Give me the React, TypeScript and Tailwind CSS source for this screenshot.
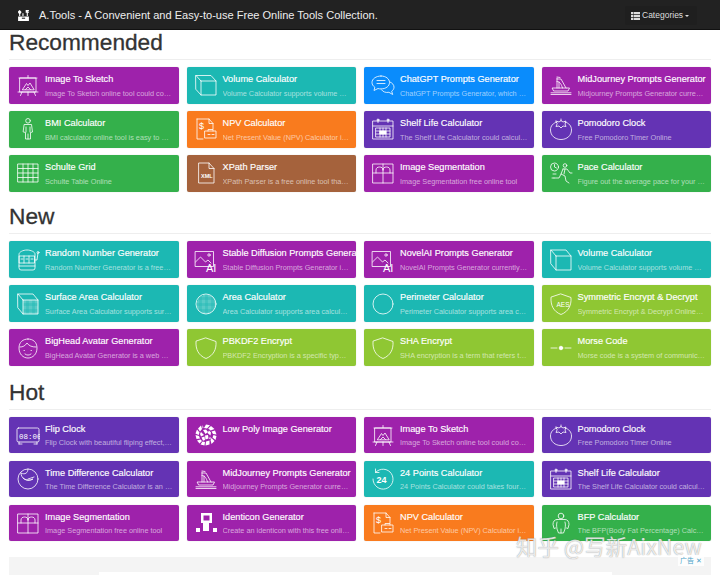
import React from "react";

const S = ({ children, fill }: { children: React.ReactNode; fill?: boolean }) => (
  <svg viewBox="0 0 24 24" className="w-[24px] h-[24px] shrink-0" fill={fill ? "currentColor" : "none"} stroke={fill ? "none" : "currentColor"} strokeWidth={0.8} strokeLinecap="round" strokeLinejoin="round">
    {children}
  </svg>
);

const dots = (x: number, y: number, w: number, h: number, keep?: (px: number, py: number) => boolean) => {
  const out: React.ReactNode[] = [];
  for (let i = x; i < x + w; i += 1.2)
    for (let j = y; j < y + h; j += 1.2)
      if (!keep || keep(i, j)) out.push(<rect key={`${i}-${j}`} x={i} y={j} width={0.6} height={0.6} fill="currentColor" stroke="none" opacity={0.75} />);
  return out;
};

const icons: Record<string, React.ReactNode> = {
  sketch: <S><path d="M2 19h20M12 2.500v2M4 5h16v14H4zM3 5h18M6 19l-1.500 3.500M18 19l1.500 3.500M12 19v3.500M6.500 16.500l4-6 1.500 2 2-2.500 4 6.500zM9.500 16.500l2.500-2.500 2.500 2.500" /></S>,
  cube: <S><path d="M2 2.500h15l5 5.500v14H7l-5-5.500zM7 8h15M7 8v14M2 2.500L7 8" /></S>,
  cube2: <S><path d="M2 2h15l5 6v14H7l-5-6zM7 8h15M7 8v14M2 2l5 6" /></S>,
  chat: <S><path d="M10 3c-5 0-9 2.800-9 6.500 0 2 1 3.500 2.800 4.700L3 17.500l4-2c1 .3 2 .4 3 .4 5 0 8.500-2.800 8.500-6.400S15 3 10 3z" /><path d="M6 7.500h8M6 10.500h8M19 9c2.500 1 4 3 4 5.200 0 1.600-.9 3-2.300 4l1 3.300-3.800-2.200c-3 .6-6-.4-7.400-2.500" /></S>,
  boat: <S><path d="M2 21.500h20M2 19.800h20M5 18h14l1.500-3H3.500zM8 15V5M8 6h4l5 9M8 8.500c3 0 4.500 3 5.500 6.500M8 4l3 .5M10 9v6" /></S>,
  person: <S><circle cx="12" cy="3.800" r="2.300" /><path d="M8.500 7.500h7l1 7.500-2 .5V22h-5v-6.500l-2-.5zM10 10v5M14 10v5M12 17v5" /></S>,
  npv: <S><path d="M3 2h12l4 4.500V12M3 2v20h6M15 2v4.500h4" /><text x="5" y="12" fontSize="9" fill="currentColor" stroke="none" fontFamily="Liberation Sans">$</text><rect x="11" y="14" width="11" height="7" /><path d="M14 14v-1.500h5V14M14 17.500h2M18 17.500h2" /></S>,
  cal: <S><rect x="2" y="4" width="20" height="18" /><path d="M2 9h20M7 2.500v3M17 2.500v3" /><circle cx="7" cy="3" r="1" /><circle cx="17" cy="3" r="1" /><rect x="5" y="11" width="14" height="9" /><path d="M5 14h14M5 17h14M9 11v9M12 11v9M15 11v9" /><rect x="9" y="14" width="6" height="3" fill="currentColor" /></S>,
  tomato: <S><path d="M8 5C4 6 1.500 9 1.500 13c0 5.500 4.500 9.500 10.500 9.500S22.500 18.500 22.500 13c0-4-2.500-7-6.500-8" /><path d="M12 2v2M7 4l3 1 2-1.500L14 5l3-1-1 3 1 2.500-3-.5-2 2-2-2-3 .5L8 7z" /></S>,
  grid: <S><rect x="2" y="3" width="20" height="18" /><path d="M2 7.500h20M2 12h20M2 16.500h20M7 3v18M12 3v18M17 3v18" /></S>,
  xml: <S><path d="M5 2h10l5 5.500V22H5zM15 2v5.500h5" /><text x="7" y="17" fontSize="5.500" fill="currentColor" stroke="none" fontFamily="Liberation Sans" fontWeight="700">XML</text></S>,
  seg: <S><rect x="2" y="3" width="20" height="19" /><path d="M2 12h20M12 3v19M5 12V9c0-2 1.500-3 3.500-3S12 7 12 9M12 9c0-2 1.500-3 3.500-3S19 7 19 9v3" /></S>,
  pace: <S><circle cx="5.500" cy="6" r="4" /><path d="M5.500 3.500V6l2 1" /><circle cx="16" cy="4.500" r="1.800" /><path d="M14 8h4l3 4 2 0M14 8l-2 5 4 2 1 5 3 2M12 13l-2 4-5 0M16 8l-1 5" /><path d="M4 13h3M5 17H3" /></S>,
  slot: <S><path d="M3 6c0-2 4-4 8-4s8 2 8 4v14a2 2 0 01-2 2H5a2 2 0 01-2-2z" /><rect x="3.500" y="8" width="15" height="7" /><path d="M8 8v7M13 8v7M5 11h2M10 11h2M15 11h2M3 18h16M19 12h2l1-7" /><circle cx="22" cy="4.500" r="1" /></S>,
  imgai: <S><rect x="1.500" y="3.500" width="18" height="15" /><path d="M1.500 14l5-5 5 5 2.500-2 3 3" /><circle cx="15" cy="7" r="1.200" /><text x="12" y="23.500" fontSize="11" fill="currentColor" stroke="none" fontFamily="Liberation Sans">AI</text></S>,
  cubef: <S>{dots(7, 8, 15, 14)}<path d="M2 2h15l5 6v14H7l-5-6zM7 8h15M7 8v14M2 2l5 6" /></S>,
  circf: <S>{dots(2, 2, 20, 20, (x, y) => (x - 12) ** 2 + (y - 12) ** 2 < 92)}<circle cx="12" cy="12" r="10" /></S>,
  circ: <S><circle cx="12" cy="12" r="10" /></S>,
  shield: <S><path d="M12 2l10 3.500c.5 8-2.500 14-10 17C4.500 19.500 1.500 13.500 2 5.500z" /></S>,
  shieldk: <S><path d="M12 2l10 3.500c.5 8-2.500 14-10 17C4.500 19.500 1.500 13.500 2 5.500z" /><text x="7.500" y="14.500" fontSize="6.500" fill="currentColor" stroke="none" fontFamily="Liberation Sans">AES</text></S>,
  face: <S><path d="M12 3c5 0 9 3 9 9 0 6-4 10-9 10S3 18 3 12c0-6 4-9 9-9z" /><path d="M4 11c3 0 5-1 7-4 2 3 5 4 9 4M8 14.500h.5M15 14.500h.5M9 18c2 1.500 4 1.500 6 0" /></S>,
  morse: <S><path d="M2 12h6M16 12h6" /><circle cx="12" cy="12" r="1.800" fill="currentColor" /></S>,
  flip: <S><rect x="1" y="5" width="22" height="14" rx="1.500" /><path d="M3 21h3M18 21h3M3 19v2M21 19v2" /><text x="3" y="15.500" fontSize="7.500" fill="currentColor" stroke="none" fontFamily="Liberation Mono">08:00</text></S>,
  poly: (
    <S fill>
      <path d="M12 1.500l4 .8-3 3.200-3-.5zM17 3l3.500 3-3.800 1.500-2.500-2zM21 7.500l1.500 4-3.500-.5-1.500-2.500zM22.500 13l-1 4-3-2.500 1-2.500zM20.500 18l-3 3-1-4 1-2zM15.500 21.500l-4 1 .5-4 3.500-1zM10.500 22.500l-4-1 2-3 2.500.5zM5.500 20.500L3 17.500l3.500-1 1.500 1.500zM2.500 16l-1-4 3.500 1 1 2.500zM1.500 10.500l1.500-4 2.500 3-.8 2.500zM4 5.500l3-3 1 3.500-2 2.500zM8.500 2l1 2.500-1 1zM9 7l3-.5 2 2.500-2.500 2zM15 7.500l2 2 -.5 3-3-2.500zM7 9l3 3-3 1.500-1-2.500zM11 12.500l3 -.5.5 3.500-3 1zM16 13.500l1 2-2 .5zM7.500 14.500l3 -1 .5 3.500-2 .8z" />
    </S>
  ),
  time: <S><circle cx="12" cy="12" r="10" /><path d="M12 2c0 4-3 6-7 4 0 5 5 9 12 6-3 2-7 2-10-1" /><path d="M12 12l6-2" /></S>,
  ident: <S fill><path fillRule="evenodd" d="M7 2h11v10h-3v8h-6v-8H7zM9.500 4.500v5h6v-5z" /><rect x="2" y="17" width="4" height="4" /><rect x="19" y="17" width="4" height="4" /></S>,
  p24: <S><path d="M4.500 5.500A10 10 0 112 12M4.500 2v3.500H8" /><text x="5.500" y="16" fontSize="9" fontWeight="700" fill="currentColor" stroke="none" fontFamily="Liberation Sans">24</text></S>,
  bfp: <S><circle cx="12" cy="5" r="2.800" /><path d="M8 8.500h8c2.500 0 4 2 4 5l-1 4-1.500-.5M8 8.500c-2.500 0-4 2-4 5l1 4 1.500-.5M8 11c-1 3 0 6 0 7l1.500 4h5L16 18c0-1 1-4 0-7M12 18v4" /></S>,
};

type C = [string, string, string, string];
const P = "bg-[#9e22ab]", T = "bg-[#1cb8b3]", B = "bg-[#0a8cfc]", G = "bg-[#34b04b]", O = "bg-[#f97b1e]", R = "bg-[#a5623c]", D = "bg-[#6433b4]", L = "bg-[#8fc733]";

const recommended: C[] = [
  [P, "sketch", "Image To Sketch", "Image To Sketch online tool could convert your image"],
  [T, "cube", "Volume Calculator", "Volume Calculator supports volume calculations"],
  [B, "chat", "ChatGPT Prompts Generator", "ChatGPT Prompts Generator, which is a free tool"],
  [P, "boat", "MidJourney Prompts Generator", "Midjourney Prompts Generator currently supports"],
  [G, "person", "BMI Calculator", "BMI calculator online tool is easy to use and free"],
  [O, "npv", "NPV Calculator", "Net Present Value (NPV) Calculator is a free tool"],
  [D, "cal", "Shelf Life Calculator", "The Shelf Life Calculator could calculate the date"],
  [D, "tomato", "Pomodoro Clock", "Free Pomodoro Timer Online"],
  [G, "grid", "Schulte Grid", "Schulte Table Online"],
  [R, "xml", "XPath Parser", "XPath Parser is a free online tool that can parse"],
  [P, "seg", "Image Segmentation", "Image Segmentation free online tool"],
  [G, "pace", "Pace Calculator", "Figure out the average pace for your next run"],
];
const fresh: C[] = [
  [T, "slot", "Random Number Generator", "Random Number Generator is a free online tool"],
  [P, "imgai", "Stable Diffusion Prompts Generator", "Stable Diffusion Prompts Generator is a free tool"],
  [P, "imgai", "NovelAI Prompts Generator", "NovelAI Prompts Generator currently supports all"],
  [T, "cube2", "Volume Calculator", "Volume Calculator supports volume calculations"],
  [T, "cubef", "Surface Area Calculator", "Surface Area Calculator supports surface area"],
  [T, "circf", "Area Calculator", "Area Calculator supports area calculations"],
  [T, "circ", "Perimeter Calculator", "Perimeter Calculator supports area calculations"],
  [L, "shieldk", "Symmetric Encrypt & Decrypt", "Symmetric Encrypt & Decrypt Online tool supports"],
  [P, "face", "BigHead Avatar Generator", "BigHead Avatar Generator is a web application"],
  [L, "shield", "PBKDF2 Encrypt", "PBKDF2 Encryption is a specific type of encryption"],
  [L, "shield", "SHA Encrypt", "SHA encryption is a term that refers to a family"],
  [L, "morse", "Morse Code", "Morse code is a system of communication using"],
];
const hot: C[] = [
  [D, "flip", "Flip Clock", "Flip Clock with beautiful fliping effect, free online"],
  [P, "poly", "Low Poly Image Generator", ""],
  [P, "sketch", "Image To Sketch", "Image To Sketch online tool could convert your image"],
  [D, "tomato", "Pomodoro Clock", "Free Pomodoro Timer Online"],
  [D, "time", "Time Difference Calculator", "The Time Difference Calculator is an online tool"],
  [P, "boat", "MidJourney Prompts Generator", "Midjourney Prompts Generator currently supports"],
  [T, "p24", "24 Points Calculator", "24 Points Calculator could takes four numbers"],
  [D, "cal", "Shelf Life Calculator", "The Shelf Life Calculator could calculate the date"],
  [P, "seg", "Image Segmentation", "Image Segmentation free online tool"],
  [P, "ident", "Identicon Generator", "Create an identicon with this free online tool now"],
  [O, "npv", "NPV Calculator", "Net Present Value (NPV) Calculator is a free tool"],
  [G, "bfp", "BFP Calculator", "The BFP(Body Fat Percentage) Calculator is a tool"],
];

const Card = ({ c }: { c: C }) => (
  <div className={`${c[0]} h-[36.5px] rounded-[2px] flex items-center pl-[7px] text-white overflow-hidden shadow-[0_0_1px_rgba(0,0,0,0.25)]`}>
    <div className="w-[29px] shrink-0 flex items-center">{icons[c[1]]}</div>
    <div className="min-w-0 flex-1 pr-[6px] self-start pt-[7px]">
      <div className="text-[9.2px] leading-[11px] whitespace-nowrap [-webkit-text-stroke:0.15px_white]">{c[2]}</div>
      <div className="text-[7.3px] leading-[9px] mt-[3.5px] text-white/60 truncate">{c[3]}</div>
    </div>
  </div>
);

const Section = ({ title, items, after }: { title: string; items: C[]; after: string }) => (
  <section className={after}>
    <h2 className="h-[30px] border-b border-[#eeeeee] text-[22.7px] leading-[25px] text-[#333] [-webkit-text-stroke:0.3px_#333]">{title}</h2>
    <div className="grid grid-cols-4 gap-x-[8px] gap-y-[7.5px] mt-[7px]">
      {items.map((c, i) => <Card key={i} c={c} />)}
    </div>
  </section>
);

export default function App() {
  return (
    <div className="relative w-[720px] h-[575px] overflow-hidden bg-white font-['Liberation_Sans',Arial,sans-serif]">
      <header className="h-[30px] bg-[#222222] border-b border-[#111] flex items-center pt-[2px] pl-[17px] pr-[23px] text-white">
        <svg viewBox="0 0 24 24" className="w-[13px] h-[13px] mr-[9px]" fill="currentColor">
          <path d="M2 14h20v8H2zM5 2l3 3v2L6 9v4H4V9L2 7V4zM16 2h6v2h-2v1h2v2h-2v6h-2V7h-2V3zM10 8h2v5h-2z" />
          <rect x="9" y="16" width="6" height="2" fill="#222" />
        </svg>
        <span className="text-[11.05px] leading-none text-[#eee]">A.Tools - A Convenient and Easy-to-use Free Online Tools Collection.</span>
        <div className="ml-auto h-[19px] w-[72px] bg-[#1f1f1f] rounded-[2px] flex items-center pl-[6px] text-[8.5px] text-[#ddd]">
          <svg viewBox="0 0 9 8" className="w-[9px] h-[8px] mr-[2px]" fill="currentColor"><path d="M0 0h2.500v2.200H0zM3 0h6v2.200H3zM0 2.900h2.500v2.200H0zM3 2.900h6v2.200H3zM0 5.800h2.500V8H0zM3 5.800h6V8H3z" /></svg>
          Categories
          <span className="ml-[2px] w-0 h-0 border-x-[2.500px] border-x-transparent border-t-[2.500px] border-t-[#ddd]" />
        </div>
      </header>
      <main className="px-[9px]">
        <Section title="Recommended" items={recommended} after="mb-[12.75px]" />
        <Section title="New" items={fresh} after="mb-[13.75px]" />
        <Section title="Hot" items={hot} after="" />
        <div className="mt-[15.5px] h-[40px] bg-[#f4f4f4] pl-[90px] pt-[15px] pr-[99px]">
          <div className="h-[25px] bg-white" />
        </div>
      </main>
      <div className="absolute left-[516px] top-[532px] text-[21.5px] leading-[28px] text-white/80 whitespace-nowrap font-['Noto_Sans_CJK_SC','Liberation_Sans',sans-serif] [text-shadow:0_0_1px_rgba(80,80,80,0.7)]">知乎 @写新AixNew</div>
      <div className="absolute left-[678px] top-[555px] h-[11px] px-[2px] bg-white/80 text-[7px] leading-[11px] text-[#4aa3c8] font-['Noto_Sans_CJK_SC',sans-serif]">广告 ✕</div>
    </div>
  );
}
